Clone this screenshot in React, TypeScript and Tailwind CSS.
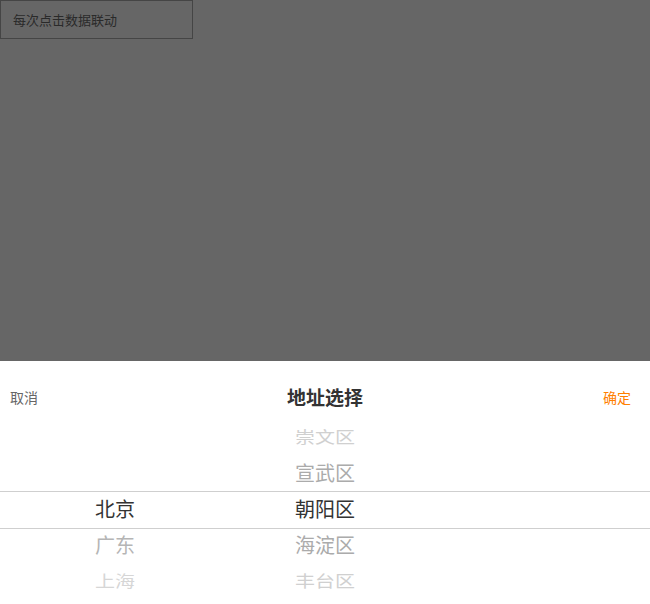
import React from "react";

const font = { fontFamily: '"Noto Sans CJK SC", "Noto Sans", sans-serif' };

const col1 = [
  { t: "", c: "" },
  { t: "", c: "" },
  { t: "北京", c: "text-[#333]" },
  { t: "广东", c: "text-[#b5b5b5]" },
  { t: "上海", c: "text-[#d6d6d6] scale-y-[0.8]" },
];
const col2 = [
  { t: "崇文区", c: "text-[#d0d0d0] scale-y-[0.8]" },
  { t: "宣武区", c: "text-[#ababab]" },
  { t: "朝阳区", c: "text-[#333]" },
  { t: "海淀区", c: "text-[#ababab]" },
  { t: "丰台区", c: "text-[#d0d0d0] scale-y-[0.8]" },
];

export default function App() {
  return (
    <div className="flex h-[604px] w-[650px] flex-col bg-[#666666]" style={font}>
      <div className="h-[361px] shrink-0">
        <div className="flex h-[39px] w-[193px] items-center border border-[#454545] pl-[12px] text-[13px] text-[#2a2a2a]">
          每次点击数据联动
        </div>
      </div>
      <div className="flex flex-1 flex-col bg-white">
        <div className="flex h-[59px] items-start justify-between px-[10px] pt-[25px]">
          <span className="w-[60px] text-[14px] leading-[22px] text-[#666]">取消</span>
          <span className="text-[19px] font-bold leading-[22px] text-[#333]">地址选择</span>
          <span className="w-[60px] pr-[9px] text-right text-[14px] leading-[22px] text-[#ff8000]">确定</span>
        </div>
        <div className="relative flex">
          <div className="pointer-events-none absolute left-0 right-0 top-[71px] h-[38px] border-y border-[#cfcfcf]" />
          <div className="flex w-[230px] flex-col">
            {col1.map((r, i) => (
              <div key={i} className="flex h-[36px] items-center justify-center pb-[2px]">
                <span className={`block text-[20px] ${r.c}`}>{r.t}</span>
              </div>
            ))}
          </div>
          <div className="flex w-[190px] flex-col">
            {col2.map((r, i) => (
              <div key={i} className="flex h-[36px] items-center justify-center pb-[2px]">
                <span className={`block text-[20px] ${r.c}`}>{r.t}</span>
              </div>
            ))}
          </div>
          <div className="flex-1" />
        </div>
      </div>
    </div>
  );
}
